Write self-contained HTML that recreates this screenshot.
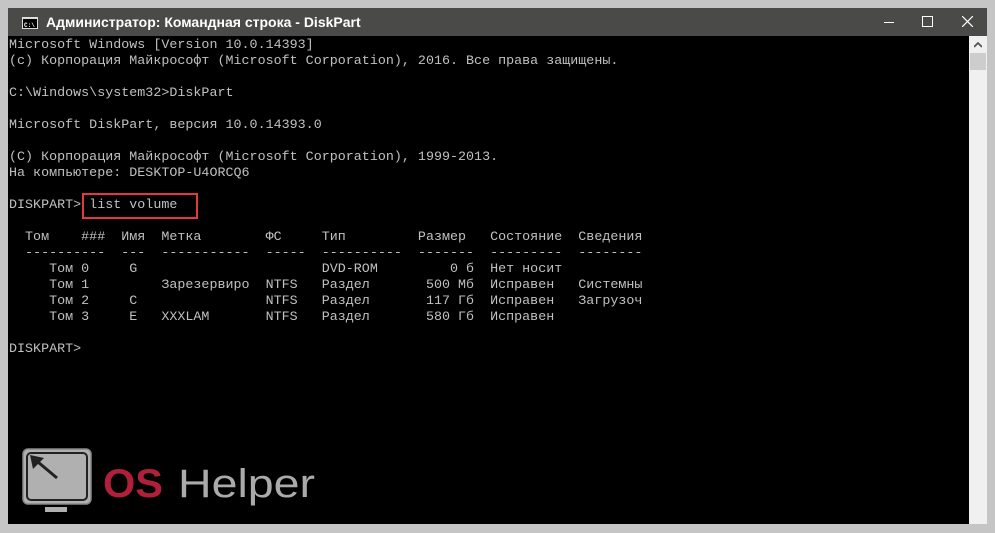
<!DOCTYPE html>
<html><head><meta charset="utf-8"><style>
html,body{margin:0;padding:0;width:995px;height:533px;background:#c5c5c5;overflow:hidden;position:relative}
#title{position:absolute;left:8px;top:8px;width:979px;height:28px;background:#4a4a48;color:#fff;font:bold 14px "Liberation Sans","DejaVu Sans",sans-serif}
#title .t{position:absolute;left:38px;top:6px}
#con{position:absolute;left:8px;top:36px;width:961px;height:488px;background:#000}
#sb{position:absolute;left:969px;top:36px;width:18px;height:488px;background:#f0f0f0}
pre{position:absolute;left:9px;top:38px;margin:0;font:13.33px/16px "Liberation Mono","DejaVu Sans Mono",monospace;color:#c0c0c0;letter-spacing:0.02px}
</style></head><body>
<div id="title">
<svg style="position:absolute;left:14px;top:9px" width="16" height="12"><rect x="0.5" y="0.5" width="15" height="11" fill="#000" stroke="#ddd"/><rect x="0" y="0" width="16" height="2" fill="#ddd"/><text x="2" y="10" font-size="6" fill="#fff" font-family="Liberation Mono">C:\</text></svg>
<span class="t">Администратор: Командная строка - DiskPart</span>
<div style="position:absolute;left:876px;top:14px;width:10px;height:1px;background:#fff"></div>
<div style="position:absolute;left:914px;top:8px;width:9px;height:9px;border:1px solid #fff"></div>
<svg style="position:absolute;left:954px;top:8px" width="11" height="11"><path d="M0 0L11 11M11 0L0 11" stroke="#fff" stroke-width="1.2"/></svg>
</div>
<div id="con"></div>
<div id="sb">
<svg style="position:absolute;left:5px;top:6px" width="8" height="6"><path d="M0 5L4 1L8 5" stroke="#555" stroke-width="1.8" fill="none"/></svg>
<div style="position:absolute;left:1px;top:17px;width:16px;height:17px;background:#cdcdcd"></div>
</div>
<pre>Microsoft Windows [Version 10.0.14393]
(c) Корпорация Майкрософт (Microsoft Corporation), 2016. Все права защищены.

C:\Windows\system32>DiskPart

Microsoft DiskPart, версия 10.0.14393.0

(С) Корпорация Майкрософт (Microsoft Corporation), 1999-2013.
На компьютере: DESKTOP-U4ORCQ6

DISKPART&gt; list volume

  Том    ###  Имя  Метка        ФС     Тип         Размер   Состояние  Сведения
  ----------  ---  -----------  -----  ----------  -------  ---------  --------
     Том 0     G                       DVD-ROM         0 б  Нет носит
     Том 1         Зарезервиро  NTFS   Раздел       500 Мб  Исправен   Системны
     Том 2     C                NTFS   Раздел       117 Гб  Исправен   Загрузоч
     Том 3     E   XXXLAM       NTFS   Раздел       580 Гб  Исправен

DISKPART&gt;</pre>
<div style="position:absolute;left:82px;top:193px;width:112px;height:22px;border:2px solid #e0393e"></div>
<svg style="position:absolute;left:20px;top:445px" width="310" height="80">
<rect x="3" y="4" width="68" height="55" rx="5" fill="#b0b0b0" stroke="#888" stroke-width="1.5"/>
<rect x="7" y="8" width="60" height="47" rx="4" fill="#b0b0b0" stroke="#222" stroke-width="2"/>
<rect x="25" y="62" width="22" height="5" fill="#b0b0b0"/>
<path d="M12 12L37 33" stroke="#222" stroke-width="3"/>
<path d="M10 10L24 13L13 24Z" fill="#222"/>
<text x="83" y="52" font-family="Liberation Sans,sans-serif" font-weight="bold" font-size="40" fill="#b0203a" textLength="60" lengthAdjust="spacingAndGlyphs">OS</text>
<text x="158" y="52" font-family="Liberation Sans,sans-serif" font-size="40" fill="#aaa" textLength="137" lengthAdjust="spacingAndGlyphs">Helper</text>
</svg>
</body></html>
